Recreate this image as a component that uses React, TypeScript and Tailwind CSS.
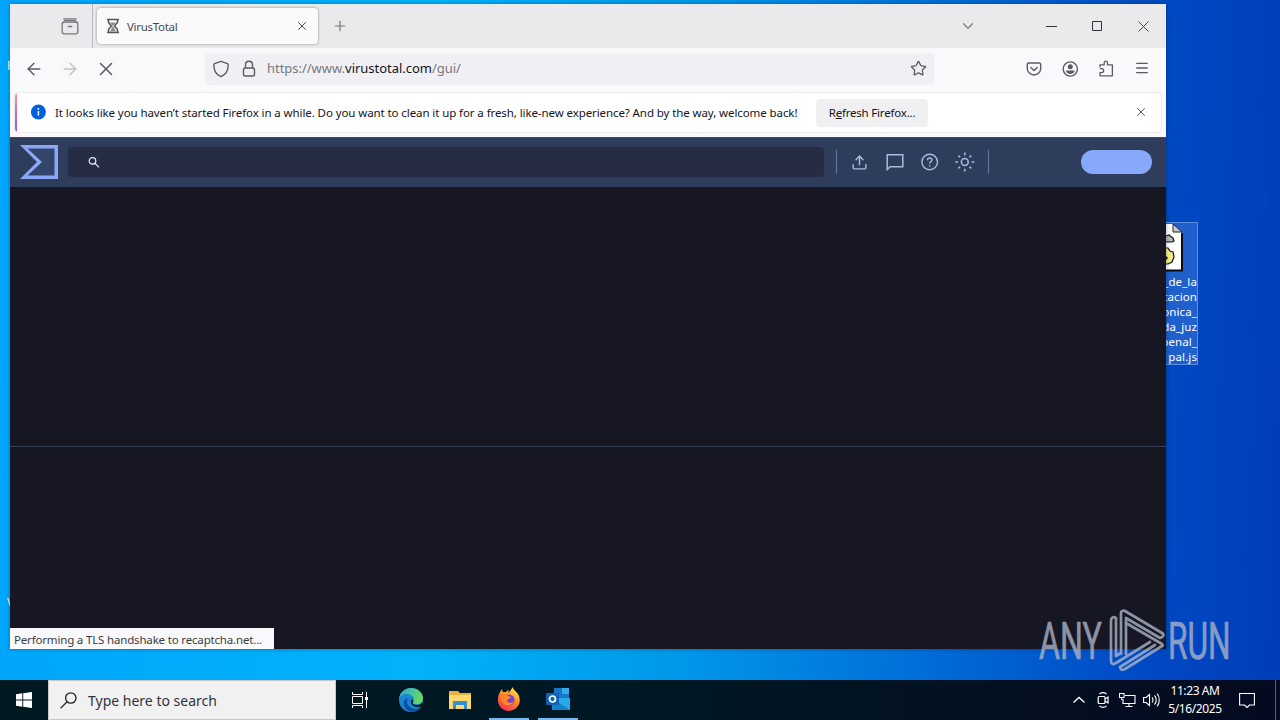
import { X, Plus, ChevronDown, ArrowLeft, ArrowRight, Star, Menu, Upload } from 'lucide-react';

const fileLines = ['_de_la', 'tacion', 'onica_', 'da_juz', 'penal_', 'pal.js'];

function Tabs() {
  return (
    <div className="flex h-11 items-center bg-[#eaeaed] text-[#4a4a52]">
      <div className="flex h-full w-[83px] items-center justify-end border-r border-[#b9b9bf] pr-[13px]">
        <svg className="h-[18px] w-[18px]" viewBox="0 0 18 18" fill="none" stroke="#77777d" strokeWidth="1.3">
          <path d="M3 2.6V1.8h12v.8" />
          <rect x="1.2" y="5" width="15.6" height="11.8" rx="2.2" />
          <path d="M3 5c0-1 .6-1.6 1.5-1.6h9c.9 0 1.5.6 1.5 1.6M6.7 9.5h4.6" />
        </svg>
      </div>
      <div className="ml-[4px] flex h-9 w-[221px] items-center rounded bg-[#fafafb] pl-2 pr-[9px] shadow-[0_0_3px_rgba(0,0,0,0.4)]">
        <svg className="h-4 w-4 shrink-0" viewBox="0 0 16 16" fill="none" stroke="#55555b" strokeWidth="1.5">
          <path d="M2 1.5h12M2 14.5h12M3.5 2v2.500L6.500 8l-3 3.500V14M12.500 2v2.500L9.500 8l3 3.500V14" />
          <path d="M5 4.500h6L8 8l3 5.500H5L8 8z" fill="#88888e" stroke="none" />
        </svg>
        <span className="ml-[6px] pt-px text-[11.5px] tracking-[-0.3px]">VirusTotal</span>
        <X className="ml-auto h-3.5 w-3.5" strokeWidth={1.7} />
      </div>
      <Plus className="ml-[14px] h-4 w-4 text-[#77777d]" strokeWidth={1.8} />
      <ChevronDown className="ml-auto mr-[69px] h-[18px] w-[18px] text-[#808087]" strokeWidth={1.8} />
      <div className="flex w-[103px] items-center justify-between text-[#33333a]">
        <svg className="h-[11px] w-[11px]" viewBox="0 0 11 11" stroke="currentColor"><path d="M0 5.500h11" /></svg>
        <svg className="h-[11px] w-[11px]" viewBox="0 0 11 11" fill="none" stroke="currentColor"><path d="M.5.5h9v9H.5z" /></svg>
        <svg className="h-[11px] w-[11px]" viewBox="0 0 11 11" stroke="currentColor" strokeWidth=".9"><path d="m.5.5 10 10m0-10-10 10" /></svg>
      </div>
      <div className="w-[17px]" />
    </div>
  );
}

function Toolbar() {
  return (
    <div className="flex h-[41px] items-center bg-[#f9f9fb] text-[#5b5b66]">
      <div className="flex w-[195px] items-center pl-[14px]">
        <ArrowLeft className="h-5 w-5" strokeWidth={1.7} />
        <ArrowRight className="ml-[16px] h-5 w-5 text-[#c2c2c8]" strokeWidth={1.7} />
        <X className="ml-[15px] h-[22px] w-[22px]" strokeWidth={1.7} />
      </div>
      <div className="flex h-8 w-[729px] items-center rounded bg-[#f0f0f4] px-[7px]">
        <svg className="h-[18px] w-[18px]" viewBox="0 0 18 18" fill="none" stroke="currentColor" strokeWidth="1.4" strokeLinejoin="round">
          <path d="M9 1.300 15.500 3.600c.5.2.7.6.7 1.200C16.200 10.500 13.200 15 9 16.700 4.800 15 1.800 10.500 1.800 4.800c0-.6.2-1 .7-1.200z" />
        </svg>
        <svg className="ml-[10px] h-[18px] w-[18px]" viewBox="0 0 18 18" fill="none" stroke="currentColor" strokeWidth="1.4">
          <rect x="3.500" y="8" width="11" height="8" rx="1.800" />
          <path d="M5.500 8V4.800C5.500 2.800 7 1.300 9 1.300s3.500 1.500 3.500 3.500V8" />
        </svg>
        <span className="ml-[9px] pt-px text-[13px] tracking-[-0.03px] text-[#777780]">
          https://www.<span className="text-[#15141a]">virustotal.com</span>/gui/
        </span>
        <Star className="ml-auto h-[17px] w-[17px]" strokeWidth={1.8} />
      </div>
      <div className="ml-auto mr-4 flex items-center gap-[20px]">
        <svg className="h-4 w-4" viewBox="0 0 16 16" fill="none" stroke="currentColor" strokeWidth="1.400" strokeLinecap="round" strokeLinejoin="round">
          <path d="M2.700 2h10.600c.8 0 1.400.6 1.400 1.400v4C14.700 11.100 11.700 14 8 14S1.300 11.100 1.300 7.400v-4C1.300 2.600 1.900 2 2.700 2z" />
          <path d="M4.800 6.400 8 9.400l3.200-3" />
        </svg>
        <svg className="h-4 w-4 overflow-visible" viewBox="0 0 16 16" fill="none" stroke="currentColor" strokeWidth="1.400">
          <circle cx="8.300" cy="8" r="7.100" />
          <circle cx="8.300" cy="5.800" r="2.500" fill="currentColor" stroke="none" />
          <path d="M4.100 9.500h8.400c0 2.300-1.900 3.500-4.200 3.500s-4.200-1.200-4.200-3.500z" fill="currentColor" stroke="none" />
        </svg>
        <svg className="h-4 w-4 overflow-visible" viewBox="0 0 16 16" fill="none" stroke="currentColor" strokeWidth="1.300" strokeLinejoin="round">
          <path d="M2 6.600V3.900h4.200V1.700C6.200.8 6.900.2 7.800.2s1.600.6 1.600 1.500v2.200h5v10.900H2v-3.200h1.700c1.200 0 2-.8 2-2s-.8-1.900-2-1.900H2" />
        </svg>
        <Menu className="mb-0.5 h-4 w-4" strokeWidth={1.900} />
      </div>
    </div>
  );
}

function Notice() {
  return (
    <div className="h-12 bg-[#f9f9fb] pb-[5px] pl-[5px] pr-[5px] pt-1">
      <div className="flex h-[39px] items-center overflow-hidden rounded-[4px] bg-white shadow-[0_0_2px_rgba(0,0,0,0.2)]">
        <div className="h-full w-[2px] bg-gradient-to-b from-[#ff9a8a] via-[#d667b5] to-[#9059e0]" />
        <svg className="mb-px ml-[13px] h-4 w-4" viewBox="0 0 16 16">
          <circle cx="8.400" cy="8" r="7.500" fill="#0060df" />
          <path d="M8.400 7v4.500M8.400 4v1.700" stroke="#fff" strokeWidth="1.500" />
        </svg>
        <span className="ml-[9px] w-[743px] whitespace-nowrap pt-px text-[11.5px] tracking-[-0.09px] text-[#15141a]">
          It looks like you haven’t started Firefox in a while. Do you want to clean it up for a fresh, like-new experience? And by the way, welcome back!
        </span>
        <button className="ml-[18px] h-7 w-28 whitespace-nowrap rounded bg-[#f0f0f2] pt-px text-[11.5px] tracking-[-0.2px] text-[#15141a]">
          R<span className="underline">e</span>fresh Firefox...
        </button>
        <X className="mb-px ml-auto mr-[13px] h-3.5 w-3.5 text-[#55555b]" strokeWidth={1.700} />
      </div>
    </div>
  );
}

function SiteHeader() {
  return (
    <div className="flex h-[50px] shrink-0 items-center border-t border-[#3c4a60] bg-[#2f3d5c] pb-px text-[#a9bbdf]">
      <svg className="ml-[10px] h-[34px] w-[38px]" viewBox="0 0 38 34">
        <path d="M0 0h38v34H0l17-17z" fill="#8aa8f8" />
        <path d="M7.500 3.500h27v27h-27L22 17z" fill="#34456a" />
      </svg>
      <div className="ml-[10px] flex h-[30px] w-[756px] items-center rounded bg-[#252c43] pl-[20px]">
        <svg className="h-3 w-3" viewBox="0 0 12 12" fill="none" stroke="#e8ecf6" strokeWidth="1.200">
          <circle cx="4.500" cy="4.900" r="3.300" />
          <path d="m7 7.400 4 4" />
        </svg>
      </div>
      <div className="ml-3 h-6 w-px bg-[#6478a0]" />
      <Upload className="ml-[14px] h-[17px] w-[17px]" strokeWidth={2} />
      <svg className="ml-[18px] h-[18px] w-[18px]" viewBox="0 0 18 18" fill="none" stroke="currentColor" strokeWidth="1.500">
        <path d="M1.200 1.800h15.600v12H4l-2.800 2.700z" />
      </svg>
      <svg className="ml-[17px] h-[18px] w-[18px]" viewBox="0 0 18 18" fill="none" stroke="currentColor" strokeWidth="1.400">
        <circle cx="8.700" cy="9" r="7.800" />
        <path d="M6.400 7.300C6.400 5.800 7.400 5 8.700 5s2.300.8 2.300 2c0 1.600-2.300 1.700-2.300 3.600M8.700 12v1.500" />
      </svg>
      <svg className="ml-[16px] h-5 w-5" viewBox="0 0 20 20" fill="none" stroke="currentColor" strokeWidth="1.500">
        <circle cx="9.800" cy="10" r="3.400" />
        <path d="M9.800.5v2.700M9.800 16.800v2.700M.3 10H3M16.600 10h2.700M3.400 3.600l1.700 1.700M14.500 14.700l1.700 1.700M3.400 16.400l1.700-1.700M14.500 5.300l1.700-1.700" />
      </svg>
      <div className="ml-[13px] h-6 w-px bg-[#6478a0]" />
      <div className="ml-auto mr-[14px] h-6 w-[71px] rounded-full bg-[#87a9fb]" />
    </div>
  );
}

function Browser() {
  return (
    <div className="absolute left-[10px] top-1 flex h-[645px] w-[1156px] flex-col bg-[#161723] shadow-[0_0_4px_rgba(0,0,0,0.35)]">
      <Tabs />
      <Toolbar />
      <Notice />
      <SiteHeader />
      <div className="h-[260px] border-b border-[#3a4058]" />
      <div className="flex flex-1 items-end">
        <div className="flex h-[21px] w-[264px] items-center whitespace-nowrap bg-[#f9f9fb] pl-1 pt-0.5 text-[11.5px] tracking-[-0.17px] text-[#3c3c42]">
          Performing a TLS handshake to recaptcha.net...
        </div>
      </div>
    </div>
  );
}

function DesktopFile() {
  return (
    <div className="absolute left-[1122px] top-[222px] flex h-[143px] w-[76px] flex-col border border-[#5b8fe0] bg-[#1f60cd]">
      <svg className="ml-[22px] h-[49px] w-[38px] shrink-0" viewBox="0 0 38 49">
        <path d="M1 1h27l9 9v37H1z" fill="#fff" />
        <path d="M28 1v8h9z" fill="#c9ccd4" stroke="#222" strokeWidth="1" />
        <path d="M37 10v37.500H1" fill="none" stroke="#0a0a14" strokeWidth="2" />
        <path d="M15 13h6l3-1 4 3 1 3-2 1H16z" fill="#b5b5bd" stroke="#111" strokeWidth="1.200" />
        <path d="M16 25h7l2 3 3 1 1 5-2 5-4 2h-7z" fill="#f2ee84" stroke="#111" strokeWidth="1.200" />
        <path d="m21 33 2 2-2 2z" fill="#111" />
      </svg>
      <div className="mt-[2px] text-right text-[11.5px] leading-[15px] tracking-[0.1px] text-white">
        {fileLines.map((line) => (
          <div key={line}>{line}</div>
        ))}
      </div>
    </div>
  );
}

function Watermark() {
  return (
    <div className="absolute left-[1035px] top-[604px] text-[#a9b3c6] opacity-80">
      <svg className="h-[76px] w-[204px] overflow-visible" viewBox="-4 -5 204 76">
        <g fill="currentColor" stroke="currentColor" strokeWidth=".7" fontFamily="Roboto, sans-serif" fontSize="51">
          <text transform="translate(0 50) scale(.63 1)">ANY</text>
          <text transform="translate(129 50) scale(.62 1)">RUN</text>
        </g>
        <g fill="none" stroke="currentColor" strokeWidth="2.700" strokeLinejoin="round" strokeLinecap="round">
          <path d="M77 9c-3-2-5 0-5 3v40c0 3 2 4 5 2l34-21" />
          <path d="M77 9v38l5-3" />
          <path d="M82 45V4c0-2 2-3 4-2l37 22c2 1 2 3 0 4l-2 1-34-20v36" />
          <path d="m87 14 36 21c1 1 1 2 0 2L86 60c-3 2-5 0-5-2l35-22" />
        </g>
      </svg>
    </div>
  );
}

function EdgeIcon() {
  return (
    <svg className="h-6 w-6" viewBox="0 0 24 24">
      <defs>
        <linearGradient id="edge" x1="0" y1="0" x2="1" y2=".3">
          <stop stopColor="#2aa9e0" />
          <stop offset="1" stopColor="#65d866" />
        </linearGradient>
      </defs>
      <circle cx="12" cy="12" r="12" fill="#1686d2" />
      <path d="M0 11C1 4 6 0 12 0c7 0 12 5 12 10 0 4-3 6-6 6-4 0-5-1-3.500-3C16 9 12 6 8 6c-4 0-7 2-8 5z" fill="url(#edge)" />
      <path d="M9 10c-3 5 1 11 7 11 3 0 5-1 7-3-3 5-8 7-13 5C3 20 3 11 9 10z" fill="#0c4f9e" />
      <path d="M14.500 13c-2 2-.5 4 3 4 2 0 4-.5 5.500-2l1.500 1-1.500 2.500c-6 2-12-1-11-6 .3-1 1.500-1 2.500.5z" fill="#061c27" />
    </svg>
  );
}

function FirefoxIcon() {
  return (
    <svg className="h-6 w-6" viewBox="0 0 24 24">
      <defs>
        <linearGradient id="fox" x1=".8" y1="0" x2=".2" y2="1">
          <stop stopColor="#fff04a" />
          <stop offset=".45" stopColor="#ff8a24" />
          <stop offset="1" stopColor="#f5255e" />
        </linearGradient>
      </defs>
      <path d="M3 5c.3-1 1-2 2-3 0 1 .5 2 1 3h3c1-1 2-2 3-2l-1 3c2-1 3-4 5-6 0 3 3 4 5 7 4 7 1 16-9 17C4 24 0 17 1 11c0-2 1-4 2-6z" fill="url(#fox)" />
      <circle cx="12" cy="13" r="5.500" fill="#7442d8" />
      <path d="M4 8c3-2 6-1 7 1l3 1c-1 2-3 2-4 3 0 3 5 4 7 1-1 5-9 6-12 1-1-2-2-4-1-7z" fill="#ff8425" />
    </svg>
  );
}

function Taskbar() {
  return (
    <div className="absolute bottom-0 left-0 flex h-10 w-full items-center bg-gradient-to-r from-[#001820] via-[#001824] to-[#050a20] text-white">
      <div className="flex w-12 justify-center">
        <svg className="h-4 w-4" viewBox="0 0 16 16" fill="#fff"><path d="M0 2.200 6.300 1.300v6.200H0zM7.200 1.200 16 0v7.500H7.200zM0 8.400h6.300v6.300L0 13.800zM7.200 8.400H16V16l-8.800-1.200z" /></svg>
      </div>
      <div className="flex h-full w-72 items-center border border-[#c9c9cc] bg-[#f1f1f2] pl-[11px] text-[#33333a]">
        <svg className="h-[17px] w-[17px]" viewBox="0 0 17 17" fill="none" stroke="#222" strokeWidth="1.300">
          <circle cx="10.800" cy="6" r="5.200" />
          <path d="M7.100 9.800.5 16.400" />
        </svg>
        <span className="ml-[11px] text-[14px]">Type here to search</span>
      </div>
      <div className="flex w-12 justify-center">
        <svg className="h-4 w-4" viewBox="0 0 16 16" fill="none" stroke="#fff">
          <path d="M.5 0v2.500h10V0M.5 16v-2.500h10V16M.5 4.500h10v7H.5zM14.500 0v16" />
          <path d="M13 5h3v3h-3z" fill="#fff" stroke="none" />
        </svg>
      </div>
      <div className="ml-[3px] flex w-12 justify-center"><EdgeIcon /></div>
      <div className="ml-[1px] flex w-12 justify-center">
        <svg className="h-5 w-[22px]" viewBox="0 0 22 20">
          <path d="M0 1h9l2 2h11v16H0z" fill="#eab042" />
          <path d="M0 5h22v14H0z" fill="#ffd86d" />
          <path d="M4 19v-8h14v8h-3v-4H7v4z" fill="#338fd0" />
        </svg>
      </div>
      <div className="ml-[5px] flex h-10 w-[40px] items-center justify-center border-b-2 border-[#75b9ef]"><FirefoxIcon /></div>
      <div className="ml-[9px] flex h-10 w-[40px] items-center justify-center border-b-2 border-[#75b9ef]">
        <svg className="h-[22px] w-6" viewBox="0 0 24 22">
          <path d="M8 0h15v11H8z" fill="#1576c8" />
          <path d="M16 0h7v6h-7z" fill="#35abeb" />
          <path d="M6 10h18v12H6z" fill="#28a8ea" />
          <path d="m6 10 18 12H6z" fill="#1480ce" />
          <rect y="5" width="13" height="12" rx="1" fill="#0f62b6" />
          <circle cx="6.500" cy="11" r="3" fill="none" stroke="#fff" strokeWidth="1.700" />
        </svg>
      </div>
      <div className="ml-auto flex items-center">
        <svg className="h-3 w-3" viewBox="0 0 12 12" fill="none" stroke="#fff" strokeWidth="1.300"><path d="m.5 8.500 5.500-5 5.500 5" /></svg>
        <svg className="ml-[12px] h-4 w-3" viewBox="0 0 12 16" fill="none" stroke="#fff" strokeWidth="1.200">
          <rect x="1.200" y="4.500" width="6.800" height="7" rx="1" />
          <path d="m8 7 3-2v6L8 9M2.500 2c2-1.500 5-1.500 7 0M2.500 14c2 1.500 5 1.500 7 0" />
        </svg>
        <svg className="ml-[10px] h-4 w-[17px]" viewBox="0 0 17 16" fill="none" stroke="#fff" strokeWidth="1.100">
          <path d="M6 3.500h10v8H4V7M10 11.500v3M6.500 14.500h7M.5 1.500h4.500v4H.5zM2.700 5.500V8" />
        </svg>
        <svg className="ml-[7px] h-4 w-[17px]" viewBox="0 0 17 16" fill="none" stroke="#fff" strokeWidth="1.100">
          <path d="M.6 5.500h2.500L6.500 2.500v11l-3.400-3H.6zM9 5.500c1.300 1.300 1.300 3.700 0 5M11.500 3.500c2.300 2.300 2.300 6.700 0 9M14 1.700c3 3 3 9.600 0 12.600" />
        </svg>
        <div className="ml-[4px] w-[62px] whitespace-nowrap text-center text-[12px] leading-[18px] tracking-[-0.4px]">
          <div>11:23 AM</div>
          <div>5/16/2025</div>
        </div>
        <svg className="ml-[13px] h-[17px] w-4" viewBox="0 0 16 17" fill="none" stroke="#fff" strokeWidth="1.100">
          <path d="M.6 1.500h14.800v11.500H10.500L8 15.500 5.500 13H.6z" />
        </svg>
        <div className="ml-[20px] mr-1 h-10 w-px bg-[#5a6070]" />
      </div>
    </div>
  );
}

export default function App() {
  return (
    <div className="relative h-[720px] w-[1280px] overflow-hidden bg-[linear-gradient(92deg,#00a6fc_0%,#00b2fa_34%,#0098ea_54%,#006cd8_73%,#0048c4_90%,#003db8_100%)] font-['Noto_Sans',sans-serif]">
      <div className="absolute left-[7px] top-[57px] text-[12px] text-white">R</div>
      <div className="absolute left-[7px] top-[594px] text-[12px] text-white">V</div>
      <DesktopFile />
      <Browser />
      <Taskbar />
      <Watermark />
    </div>
  );
}
